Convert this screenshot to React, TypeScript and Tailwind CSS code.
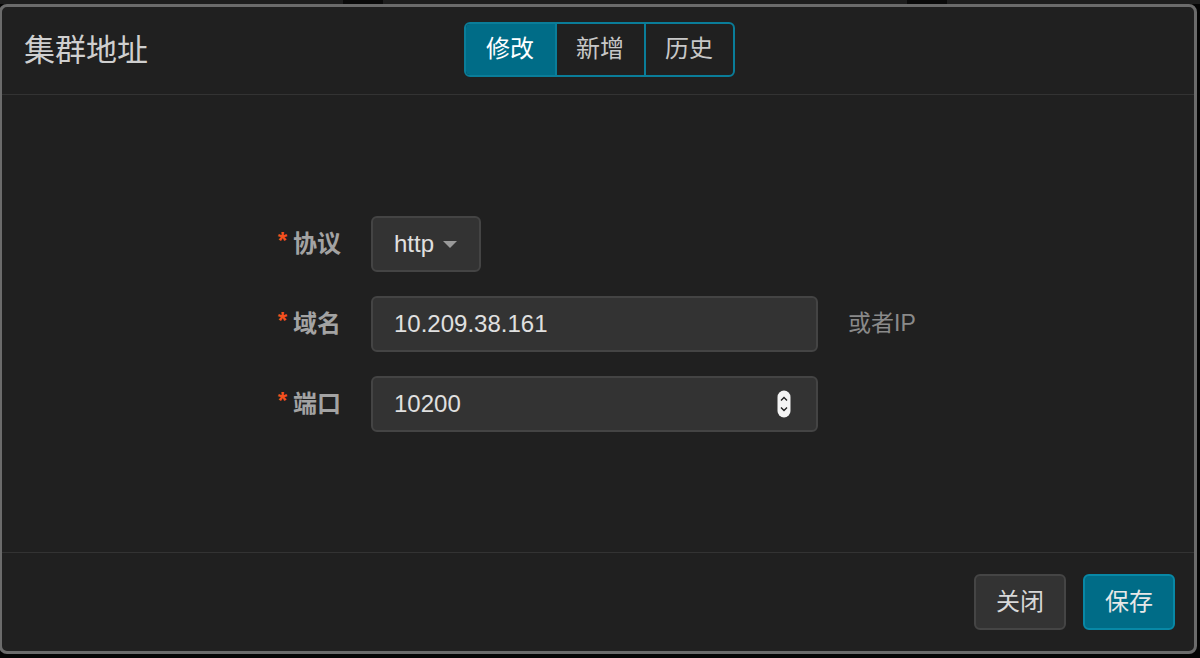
import { useState } from 'react';

const FONT = "font-['Liberation_Sans','Noto_Sans_CJK_SC',sans-serif]";

const TABS = ['修改', '新增', '历史'];

function Label({ text }: { text: string }) {
  return (
    <div className="flex w-[100px] items-center justify-end gap-[6px] font-bold text-[#a3a3a3] text-[24px]">
      <span className="-mt-[6px] text-[#f4511e] text-[24px] leading-none">*</span>
      <span>{text}</span>
    </div>
  );
}

function Spinner() {
  return (
    <svg width="14" height="28" viewBox="0 0 14 28">
      <rect x="0.5" y="0.5" width="13" height="27" rx="6.5" fill="#f4f4f4" />
      <path d="M4 10.5 L7 7.5 L10 10.5" fill="none" stroke="#222" strokeWidth="1.4" />
      <path d="M4 17.5 L7 20.5 L10 17.5" fill="none" stroke="#222" strokeWidth="1.4" />
    </svg>
  );
}

export default function App() {
  const [tab, setTab] = useState(0);
  const [host, setHost] = useState('10.209.38.161');
  const [port, setPort] = useState('10200');

  return (
    <div className={`${FONT} w-[1200px] h-[658px] overflow-hidden bg-[#050505]`}>
      {/* page behind the modal */}
      <div className="flex h-[4px] bg-[#1e1e1e]">
        <div className="ml-[343px] w-[40px] bg-[#0a0a0a]" />
        <div className="ml-[524px] w-[40px] bg-[#0a0a0a]" />
      </div>

      <div className="-ml-px flex h-[650px] w-[1198px] flex-col rounded-[8px] border-[3px] border-[#6b6b6b] bg-[#202020]">
        {/* header */}
        <div className="grid h-[88px] grid-cols-[1fr_auto_1fr] items-center border-b border-[#333] pl-[22px] pr-5">
          <h4 className="mt-[2px] text-[31px] text-[#cfcfcf]">集群地址</h4>
          <div className="-mt-[3px] flex h-[55px] overflow-hidden rounded-[6px] border-2 border-[#0a7d99]">
            {TABS.map((t, i) => (
              <button
                key={t}
                onClick={() => setTab(i)}
                className={`w-[89px] text-[24px] ${i > 0 ? 'border-l-2 border-[#0a7d99]' : ''} ${
                  tab === i ? 'bg-[#006c87] text-white' : 'text-[#c8c8c8]'
                }`}
              >
                {t}
              </button>
            ))}
          </div>
          <div />
        </div>

        {/* body */}
        <div className="flex flex-1 flex-col justify-center gap-6 pl-[239px]">
          <div className="flex h-[56px] items-center">
            <Label text="协议" />
            <button className="ml-[30px] flex h-[56px] items-center gap-[9px] rounded-[6px] border-2 border-[#444] bg-[#333] pl-[21px] pr-[22px] text-[24px] text-[#e0e0e0]">
              http
              <span className="mt-[2px] h-0 w-0 border-x-[7px] border-t-[7px] border-x-transparent border-t-[#9a9a9a]" />
            </button>
          </div>

          <div className="flex h-[56px] items-center">
            <Label text="域名" />
            <input
              value={host}
              onChange={(e) => setHost(e.target.value)}
              className="ml-[30px] h-[56px] w-[447px] rounded-[6px] border-2 border-[#444] bg-[#333] pl-[21px] text-[24px] text-[#e0e0e0] outline-none"
            />
            <span className="ml-[30px] text-[23px] text-[#8a8a8a]">或者IP</span>
          </div>

          <div className="flex h-[56px] items-center">
            <Label text="端口" />
            <div className="ml-[30px] flex h-[56px] w-[447px] items-center rounded-[6px] border-2 border-[#444] bg-[#333] pl-[21px] pr-[25px]">
              <input
                value={port}
                onChange={(e) => setPort(e.target.value)}
                className="min-w-0 flex-1 bg-transparent text-[24px] text-[#e0e0e0] outline-none"
              />
              <Spinner />
            </div>
          </div>
        </div>

        {/* footer */}
        <div className="flex h-[99px] items-center justify-end gap-[17px] border-t border-[#333] pr-[19px]">
          <button className="h-[56px] w-[92px] rounded-[6px] border-2 border-[#454545] bg-[#333] text-[24px] text-[#d8d8d8]">
            关闭
          </button>
          <button className="h-[56px] w-[92px] rounded-[6px] border-2 border-[#0888a6] bg-[#006c87] text-[24px] text-[#e8e8e8]">
            保存
          </button>
        </div>
      </div>
    </div>
  );
}
